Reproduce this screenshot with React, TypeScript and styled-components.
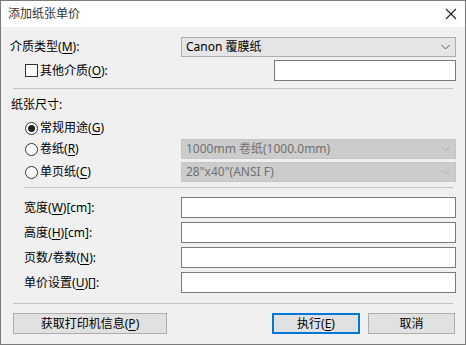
import React from "react";
import styled, { createGlobalStyle } from "styled-components";

const GlobalStyle = createGlobalStyle`
  html, body {
    margin: 0;
    padding: 0;
    background: #ffffff;
  }
  * {
    box-sizing: border-box;
  }
`;

const FONT = `"Noto Sans", "Noto Sans CJK SC", sans-serif`;

const SIZE_FIELDS = [
  { label: "宽度", key: "W", suffix: "[cm]:" },
  { label: "高度", key: "H", suffix: "[cm]:" },
  { label: "页数/卷数", key: "N", suffix: ":" },
  { label: "单价设置", key: "U", suffix: "[]:" },
];

const Mnemonic = ({ label, k, suffix }: { label: string; k: string; suffix: string }) => (
  <span>
    {label}(<u>{k}</u>){suffix}
  </span>
);

const Chevron = ({ color }: { color: string }) => (
  <svg width="9" height="6" viewBox="0 0 9 6">
    <path d="M0.5 1 L4.5 5 L8.5 1" fill="none" stroke={color} strokeWidth="1" />
  </svg>
);

export default function App() {
  return (
    <>
      <GlobalStyle />
      <Window>
        <TitleBar>
          <Title>添加纸张单价</Title>
          <Close>
            <svg width="12" height="12" viewBox="0 0 12 12">
              <path d="M1 1 L11 11 M11 1 L1 11" stroke="#222" strokeWidth="1.1" />
            </svg>
          </Close>
        </TitleBar>
        <Body>
          <Row $height={20}>
            <Label>
              <Mnemonic label="介质类型" k="M" suffix=":" />
            </Label>
            <Combo>
              <span>Canon 覆膜纸</span>
              <Chevron color="#606060" />
            </Combo>
          </Row>
          <Row $height={21} $top={3}>
            <Label $indent={15}>
              <CheckBox />
              <Mnemonic label="其他介质" k="O" suffix=":" />
            </Label>
            <TextBox $width={182} />
          </Row>

          <Separator $top={7} $left={3} />

          <Heading>纸张尺寸:</Heading>
          <Row $height={16} $top={7}>
            <Label $indent={15}>
              <Radio $checked />
              <Mnemonic label="常规用途" k="G" suffix="" />
            </Label>
          </Row>
          <Row $height={20} $top={3}>
            <Label $indent={15}>
              <Radio />
              <Mnemonic label="卷纸" k="R" suffix="" />
            </Label>
            <Combo $disabled>
              <span>1000mm 卷纸(1000.0mm)</span>
              <Chevron color="#b0b0b0" />
            </Combo>
          </Row>
          <Row $height={20} $top={3}>
            <Label $indent={15}>
              <Radio />
              <Mnemonic label="单页纸" k="C" suffix="" />
            </Label>
            <Combo $disabled>
              <span>28"x40"(ANSI F)</span>
              <Chevron color="#b0b0b0" />
            </Combo>
          </Row>

          <Separator $top={5} $left={14} />

          <Fields>
            {SIZE_FIELDS.map((f) => (
              <Row key={f.key} $height={21}>
                <Label $indent={14}>
                  <Mnemonic label={f.label} k={f.key} suffix={f.suffix} />
                </Label>
                <TextBox />
              </Row>
            ))}
          </Fields>

          <Separator $top={10} $left={3} />

          <ButtonBar>
            <Button $width={154}>
              获取打印机信息(<u>P</u>)
            </Button>
            <Spacer />
            <Button $width={88} $default>
              执行(<u>E</u>)
            </Button>
            <Button $width={87}>取消</Button>
          </ButtonBar>
        </Body>
      </Window>
    </>
  );
}

const Window = styled.div`
  width: 466px;
  height: 345px;
  border: 1px solid #7a7a7a;
  background: #f0f0f0;
  font-family: ${FONT};
  font-size: 12px;
  color: #000;
  display: flex;
  flex-direction: column;
  overflow: hidden;
`;

const TitleBar = styled.div`
  height: 26px;
  background: #ffffff;
  display: flex;
  align-items: center;
  justify-content: space-between;
  padding: 0 7px 0 7px;
`;

const Title = styled.div`
  font-size: 12px;
  color: #333;
  line-height: 16px;
`;

const Close = styled.div`
  width: 14px;
  height: 14px;
  display: flex;
  align-items: center;
  justify-content: center;
`;

const Body = styled.div`
  flex: 1;
  padding: 10px 9px 0 9px;
  display: flex;
  flex-direction: column;
`;

const Row = styled.div<{ $height: number; $top?: number }>`
  height: ${(p) => p.$height}px;
  margin-top: ${(p) => p.$top ?? 0}px;
  display: flex;
  align-items: center;
  justify-content: space-between;
`;

const Label = styled.div<{ $indent?: number }>`
  display: flex;
  align-items: center;
  gap: 2px;
  padding-left: ${(p) => p.$indent ?? 0}px;
  line-height: 16px;
  white-space: nowrap;

  u {
    text-underline-offset: 2px;
  }
`;

const Heading = styled.div`
  margin-top: 8px;
  height: 16px;
  line-height: 16px;
  padding-left: 1px;
`;

const Combo = styled.div<{ $disabled?: boolean }>`
  width: 275px;
  height: 100%;
  display: flex;
  align-items: center;
  justify-content: space-between;
  padding: 0 5px 0 4px;
  background: ${(p) => (p.$disabled ? "#cccccc" : "#e5e5e5")};
  border: 1px solid ${(p) => (p.$disabled ? "#c4c4c4" : "#adadad")};
  color: ${(p) => (p.$disabled ? "#707070" : "#000")};
  line-height: 16px;
`;

const TextBox = styled.div<{ $width?: number }>`
  width: ${(p) => p.$width ?? 275}px;
  height: 100%;
  background: #ffffff;
  border: 1px solid #7a7a7a;
`;

const CheckBox = styled.span`
  width: 13px;
  height: 13px;
  border: 1px solid #333;
  background: #fff;
  display: inline-block;
`;

const Radio = styled.span<{ $checked?: boolean }>`
  width: 13px;
  height: 13px;
  border: 1px solid #333;
  border-radius: 50%;
  background: #fff;
  display: inline-flex;
  align-items: center;
  justify-content: center;

  &::after {
    content: "";
    width: 7px;
    height: 7px;
    border-radius: 50%;
    background: #222;
    display: ${(p) => (p.$checked ? "block" : "none")};
  }
`;

const Separator = styled.div<{ $top: number; $left: number }>`
  margin-top: ${(p) => p.$top}px;
  margin-left: ${(p) => p.$left}px;
  margin-right: 3px;
  height: 1px;
  background: #c4c4c4;
`;

const Fields = styled.div`
  margin-top: 9px;
  display: flex;
  flex-direction: column;
  gap: 4px;
`;

const ButtonBar = styled.div`
  margin-top: 9px;
  margin-left: 3px;
  margin-right: 1px;
  display: flex;
  align-items: center;
  gap: 8px;
`;

const Spacer = styled.div`
  flex: 1;
`;

const Button = styled.div<{ $width: number; $default?: boolean }>`
  width: ${(p) => p.$width}px;
  height: 21px;
  background: #e1e1e1;
  border: ${(p) => (p.$default ? "2px solid #0078d7" : "1px solid #adadad")};
  display: flex;
  align-items: center;
  justify-content: center;
  line-height: 16px;

  u {
    text-underline-offset: 2px;
  }
`;
